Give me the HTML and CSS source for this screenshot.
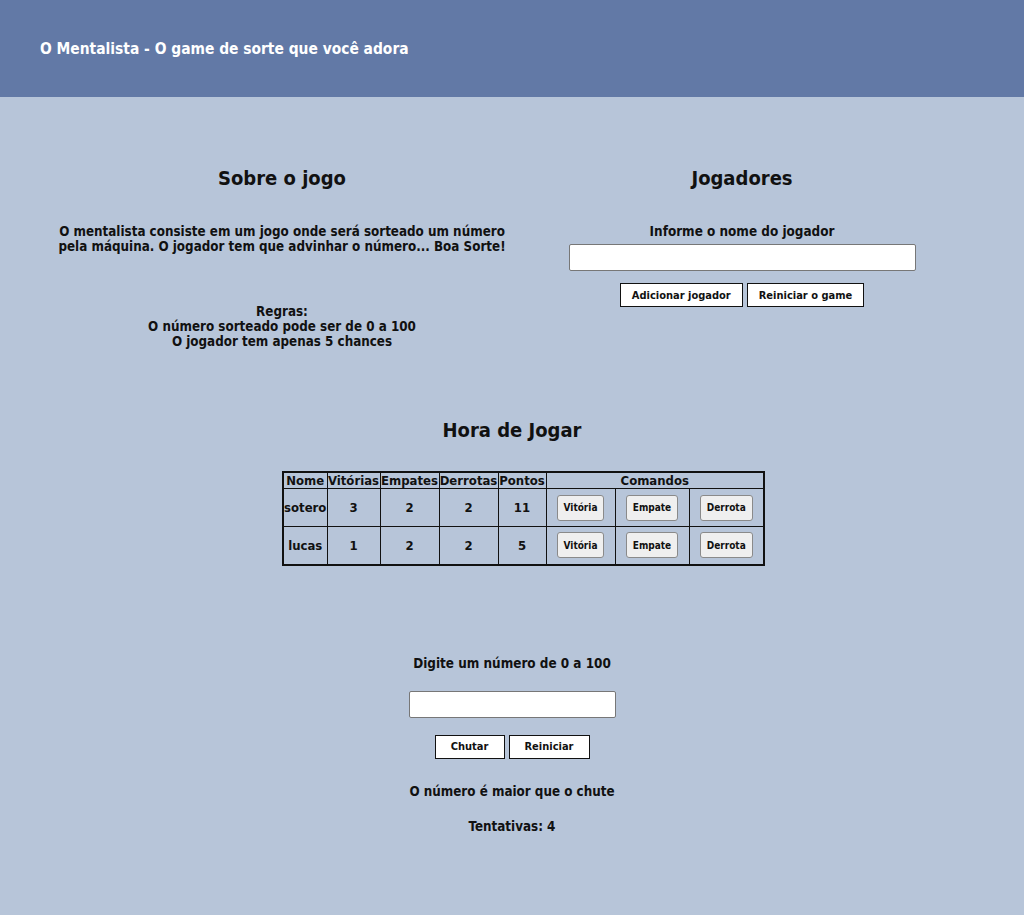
FILE: index.html
```html
<!DOCTYPE html>
<html lang="pt-BR">
<head>
<meta charset="utf-8">
<title>O Mentalista</title>
<link rel="stylesheet" href="styles.css">
</head>
<body>
<header class="topbar">
  <h1 class="brand">O Mentalista - O game de sorte que você adora</h1>
</header>
<main class="page">
  <section class="cols">
    <div class="col about">
      <h2 class="title">Sobre o jogo</h2>
      <p class="desc">O mentalista consiste em um jogo onde será sorteado um número pela máquina. O jogador tem que advinhar o número... Boa Sorte!</p>
      <p class="rules">Regras:<br>O número sorteado pode ser de 0 a 100<br>O jogador tem apenas 5 chances</p>
    </div>
    <div class="col players">
      <h2 class="title">Jogadores</h2>
      <label class="label" for="nome">Informe o nome do jogador</label>
      <input class="field wide" id="nome" type="text">
      <div class="btns">
        <button class="btn">Adicionar jogador</button>
        <button class="btn">Reiniciar o game</button>
      </div>
    </div>
  </section>
  <section class="play">
    <h2 class="title">Hora de Jogar</h2>
    <table class="score">
      <thead>
        <tr><th>Nome</th><th>Vitórias</th><th>Empates</th><th>Derrotas</th><th>Pontos</th><th colspan="3">Comandos</th></tr>
      </thead>
      <tbody>
        <tr><td>sotero</td><td class="num">3</td><td class="num">2</td><td class="num">2</td><td class="num">11</td>
          <td class="cmd c1"><button class="sbtn">Vitória</button></td><td class="cmd c2"><button class="sbtn">Empate</button></td><td class="cmd c3"><button class="sbtn">Derrota</button></td></tr>
        <tr><td>lucas</td><td class="num">1</td><td class="num">2</td><td class="num">2</td><td class="num">5</td>
          <td class="cmd c1"><button class="sbtn">Vitória</button></td><td class="cmd c2"><button class="sbtn">Empate</button></td><td class="cmd c3"><button class="sbtn">Derrota</button></td></tr>
      </tbody>
    </table>
  </section>
  <section class="guess">
    <p class="label">Digite um número de 0 a 100</p>
    <input class="field small" type="text">
    <div class="btns">
      <button class="btn b-chutar">Chutar</button>
      <button class="btn b-rein">Reiniciar</button>
    </div>
    <p class="msg">O número é maior que o chute</p>
    <p class="msg tries">Tentativas: 4</p>
  </section>
</main>
</body>
</html>
```
FILE: styles.css
```css
* { box-sizing: border-box; }
html, body { margin: 0; padding: 0; }
body {
  background: #b7c5d9;
  font-family: "DejaVu Sans Condensed", "DejaVu Sans", sans-serif;
  font-weight: bold;
  color: #111;
  min-height: 915px;
}
.topbar {
  background: #6279a6;
  height: 97px;
  display: flex;
  align-items: center;
  padding: 0 40px;
}
.brand {
  margin: 0;
  color: #fff;
  font-size: 15.4px;
  font-weight: bold;
}
.page { padding: 0 40px; }
.cols {
  display: grid;
  grid-template-columns: 484px 436px;
  padding-top: 68px;
}
.col { text-align: center; display: flex; flex-direction: column; align-items: center; }
.title {
  margin: 0;
  font-size: 20px;
  line-height: 26px;
  font-weight: bold;
}
.desc {
  margin: 33px 0 0;
  font-size: 13.3px;
  line-height: 15px;
  width: 470px;
}
.rules {
  margin: 50px 0 0;
  font-size: 13.3px;
  line-height: 15px;
}
.label {
  margin: 33px 0 0;
  font-size: 13.4px;
  line-height: 15px;
  display: block;
}
.field {
  background: #fff;
  border: 1px solid #777;
  border-radius: 2px;
  height: 27px;
  padding: 0 4px;
  font: inherit;
}
.wide { width: 347px; margin-top: 5px; }
.btns { display: flex; gap: 4px; justify-content: center; margin-top: 12px; }
.btn {
  background: #fff;
  border: 1px solid #111;
  font-family: inherit;
  font-weight: bold;
  font-size: 11px;
  color: #111;
  height: 24px;
  padding: 0 11px;
}
.play { text-align: center; padding-top: 68px; display: flex; flex-direction: column; align-items: center; }
.score {
  margin-top: 28px;
  margin-left: 23px;
  border-collapse: collapse;
  border: 2px solid #111;
  font-size: 13px;
}
.score th, .score td {
  border: 1px solid #111;
  padding: 0;
  text-align: center;
}
.score th { height: 16px; line-height: 15px; }
.score td { height: 38px; }
.score th:nth-child(1) { width: 44px; }
.score th:nth-child(2) { width: 53px; }
.score th:nth-child(3) { width: 59px; }
.score th:nth-child(4) { width: 59px; }
.score th:nth-child(5) { width: 48px; }
.score td.c1 { width: 69px; }
.score td.c2 { width: 74px; }
.score td.c3 { width: 75px; }
.sbtn {
  background: #efefef;
  border: 1px solid #8a8a8a;
  border-radius: 3px;
  font-family: inherit;
  font-weight: bold;
  font-size: 10px;
  height: 26px;
  padding: 0 6px;
  color: #111;
}
.guess {
  text-align: center;
  padding-top: 90px;
  display: flex;
  flex-direction: column;
  align-items: center;
}
.guess .label { margin: 0; }
.small { width: 207px; margin-top: 20px; }
.guess .btns { margin-top: 17px; }
.b-chutar { width: 70px; height: 24px; }
.b-rein { width: 81px; height: 24px; }
.msg { margin: 25px 0 0; font-size: 13.3px; line-height: 15px; }
.tries { margin-top: 20px; }
```
